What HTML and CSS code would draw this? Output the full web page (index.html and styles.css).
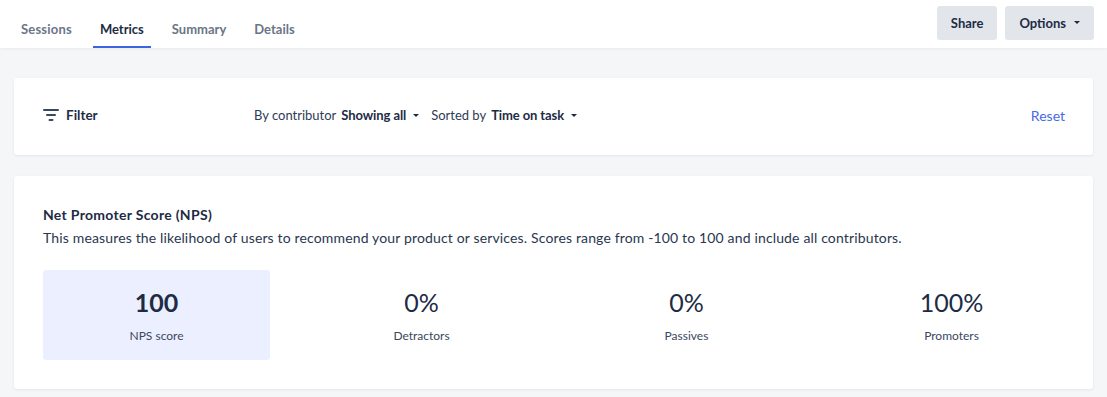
FILE: index.html
```html
<!DOCTYPE html>
<html>
<head>
<meta charset="utf-8">
<link rel="stylesheet" href="styles.css">
</head>
<body>
<header class="topbar">
  <nav class="tabs">
    <a class="tab">Sessions</a>
    <a class="tab active">Metrics</a>
    <a class="tab">Summary</a>
    <a class="tab">Details</a>
  </nav>
  <div class="actions">
    <button class="btn">Share</button>
    <button class="btn">Options <span class="caret"></span></button>
  </div>
</header>
<main class="content">
  <section class="card filter-card">
    <div class="filter-label">
      <svg class="filter-icon" width="16" height="12" viewBox="0 0 16 12"><rect x="0" y="0" width="16" height="2" rx="1"/><rect x="3" y="5" width="10" height="2" rx="1"/><rect x="5.5" y="10" width="5" height="2" rx="1"/></svg>
      <span>Filter</span>
    </div>
    <div class="selectors">
      <div class="selector">By contributor <b>Showing all</b><span class="caret"></span></div>
      <div class="selector">Sorted by <b>Time on task</b><span class="caret"></span></div>
    </div>
    <a class="reset">Reset</a>
  </section>
  <section class="card nps-card">
    <h2 class="nps-title">Net Promoter Score (NPS)</h2>
    <p class="nps-desc">This measures the likelihood of users to recommend your product or services. Scores range from -100 to 100 and include all contributors.</p>
    <div class="stats">
      <div class="stat highlight"><div class="value bold">100</div><div class="label">NPS score</div></div>
      <div class="stat"><div class="value">0%</div><div class="label">Detractors</div></div>
      <div class="stat"><div class="value">0%</div><div class="label">Passives</div></div>
      <div class="stat"><div class="value">100%</div><div class="label">Promoters</div></div>
    </div>
  </section>
</main>
</body>
</html>
```
FILE: styles.css
```css
* { box-sizing: border-box; }
html, body { margin: 0; padding: 0; }
body {
  font-family: Lato, "Open Sans", sans-serif;
  color: #1d2b45;
  background: #f5f6f8;
  width: 1107px;
  height: 397px;
  overflow: hidden;
}
.topbar {
  height: 48px;
  background: #fff;
  display: flex;
  justify-content: space-between;
  align-items: flex-start;
  box-shadow: 0 1px 3px rgba(20, 30, 50, 0.06);
  position: relative;
  z-index: 1;
}
.tabs {
  display: flex;
  padding-left: 14px;
  height: 48px;
}
.tab {
  font-size: 13px;
  font-weight: 700;
  color: #6a7588;
  padding: 20px 7px 0 7px;
  margin-right: 14px;
  line-height: 18px;
  height: 48px;
  border-bottom: 2px solid transparent;
}
.tab:first-child { letter-spacing: 0.2px; }
.tab.active {
  color: #1d2b45;
  border-bottom-color: #3c63e0;
}
.actions {
  display: flex;
  gap: 8px;
  padding: 6px 13px 0 0;
}
.btn {
  font-family: inherit;
  font-size: 13px;
  font-weight: 700;
  color: #1d2b45;
  background: #e2e5ea;
  border: none;
  border-radius: 3px;
  height: 34px;
  padding: 0 14px 1px 14px;
  display: flex;
  align-items: center;
  gap: 8px;
}
.caret {
  display: inline-block;
  width: 0;
  height: 0;
  border-left: 3px solid transparent;
  border-right: 3px solid transparent;
  border-top: 3px solid #1d2b45;
}
.content {
  padding: 30px 14px 0 14px;
  display: flex;
  flex-direction: column;
  gap: 21px;
}
.card {
  background: #fff;
  border-radius: 3px;
  box-shadow: 0 1px 3px rgba(20, 30, 50, 0.07);
}
.filter-card {
  height: 77px;
  display: flex;
  align-items: center;
  padding: 0 28px 3px 29px;
}
.filter-label {
  display: flex;
  align-items: center;
  gap: 7px;
  font-size: 13.5px;
  font-weight: 700;
  width: 211px;
}
.filter-icon { fill: #3a4760; }
.selectors {
  display: flex;
  gap: 12px;
  flex: 1;
}
.selector {
  font-size: 13px;
  color: #2f3c55;
  display: flex;
  align-items: center;
}
.selector b {
  margin-left: 5px;
  margin-right: 7px;
  color: #1d2b45;
  letter-spacing: -0.1px;
}
.reset {
  font-size: 14px;
  color: #4669e8;
}
.nps-card {
  height: 213px;
  padding: 30px 28px 0 29px;
}
.nps-title {
  font-size: 14px;
  letter-spacing: 0.3px;
  font-weight: 700;
  margin: 0;
  line-height: 18px;
}
.nps-desc {
  font-size: 14px;
  letter-spacing: 0.15px;
  margin: 5px 0 0 0;
  line-height: 18px;
  color: #2a3750;
}
.stats {
  display: grid;
  grid-template-columns: repeat(4, 1fr);
  gap: 38px;
  margin-top: 23px;
}
.stat {
  height: 90px;
  border-radius: 3px;
  display: flex;
  flex-direction: column;
  align-items: center;
  padding-top: 17px;
}
.stat.highlight { background: #ecefff; }
.value {
  font-size: 25px;
  line-height: 30px;
  color: #1d2b45;
}
.value.bold { font-weight: 700; }
.label {
  font-size: 12px;
  margin-top: 11px;
  color: #3a4760;
}
```
